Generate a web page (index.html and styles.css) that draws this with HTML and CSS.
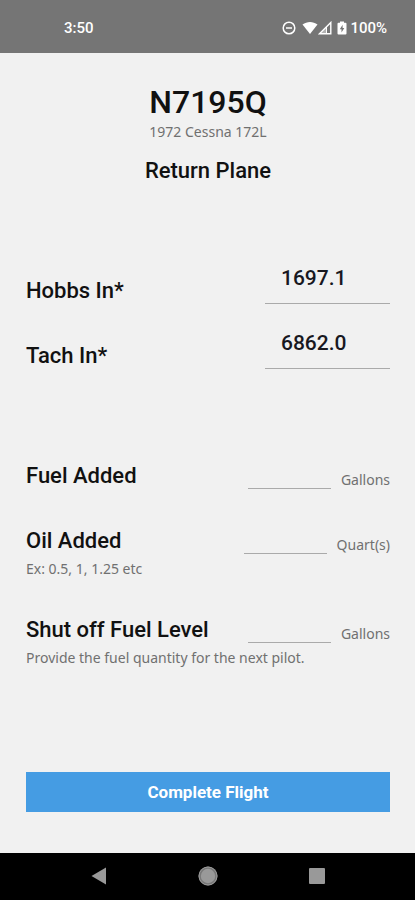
FILE: index.html
```html
<!DOCTYPE html>
<html lang="en">
<head>
<meta charset="utf-8">
<meta name="viewport" content="width=device-width, initial-scale=1">
<title>Return Plane</title>
<link rel="stylesheet" href="styles.css">
</head>
<body>
<div class="status-bar">
  <span>3:50</span>
  <div class="status-icons">
    <svg width="14" height="14" viewBox="0 0 14 14" fill="none" stroke="currentColor" stroke-width="1.5"><circle cx="7" cy="7" r="5.8"/><path d="M4 7h6"/></svg>
    <svg class="wifi" width="16" height="14" viewBox="0 0 16 14" fill="currentColor"><path d="M0.5 3.6C5 0 11 0 15.500 3.600L8 13z"/></svg>
    <svg width="14" height="14" viewBox="0 0 14 14" fill="none" stroke="currentColor" stroke-width="1.400"><path d="M1.500 12.800L12.800 1.500V12.800z"/><path d="M1.500 12.800L8.500 5.800V12.800z" fill="currentColor" fill-opacity=".45" stroke="none"/><path d="M8.500 5.800V12.800" stroke-width="1"/></svg>
    <svg class="battery" width="10" height="14" viewBox="0 0 10 14"><path fill="currentColor" d="M3 .5h4v1.300h1.500q1 0 1 1v9.700q0 1-1 1h-7q-1 0-1-1V2.800q0-1 1-1H3z"/><path fill="#757575" d="M5.600 3.800L2.800 8.200h1.700v3.300l2.800-4.400H5.600z"/></svg>
    <span>100%</span>
  </div>
</div>
<main class="screen">
  <header class="plane">
    <h1>N7195Q</h1>
    <p class="model">1972 Cessna 172L</p>
    <h2>Return Plane</h2>
  </header>
  <form class="form">
    <div class="meters">
      <div class="row">
        <label for="hobbs">Hobbs In*</label>
        <input class="meter" id="hobbs" type="text" inputmode="decimal" value="1697.1">
      </div>
      <div class="row">
        <label for="tach">Tach In*</label>
        <input class="meter" id="tach" type="text" inputmode="decimal" value="6862.0">
      </div>
    </div>
    <div class="fluids">
      <div class="row">
        <label for="fuel">Fuel Added</label>
        <div class="quantity"><input id="fuel" type="text" inputmode="decimal"><span>Gallons</span></div>
      </div>
      <div>
        <div class="row">
          <label for="oil">Oil Added</label>
          <div class="quantity"><input id="oil" type="text" inputmode="decimal"><span>Quart(s)</span></div>
        </div>
        <p class="hint">Ex: 0.5, 1, 1.25 etc</p>
      </div>
      <div>
        <div class="row">
          <label for="level">Shut off Fuel Level</label>
          <div class="quantity"><input id="level" type="text" inputmode="decimal"><span>Gallons</span></div>
        </div>
        <p class="hint">Provide the fuel quantity for the next pilot.</p>
      </div>
    </div>
    <button class="submit" type="button">Complete Flight</button>
  </form>
</main>
<nav class="nav-bar">
  <button type="button" aria-label="Back"><svg width="20" height="20" viewBox="0 0 20 20"><path fill="currentColor" d="M2.500 10L17 1.500v17z"/></svg></button>
  <button type="button" aria-label="Home"><svg width="20" height="20" viewBox="0 0 20 20"><circle cx="10" cy="10" r="9.500" fill="#777"/><circle cx="10" cy="10" r="7.200" fill="currentColor"/><circle cx="10" cy="10" r="9" fill="none" stroke="currentColor"/></svg></button>
  <button type="button" aria-label="Recent apps"><svg width="20" height="20" viewBox="0 0 20 20"><rect x="2" y="2" width="16" height="16" rx="1" fill="currentColor"/></svg></button>
</nav>
</body>
</html>
```
FILE: styles.css
```css
* {
  box-sizing: border-box;
}

body {
  display: flex;
  flex-direction: column;
  min-height: 100vh;
  margin: 0;
  background: #f1f1f1;
  color: #111;
  font-family: Roboto, sans-serif;
}

h1, h2, p {
  margin: 0;
}

.status-bar {
  display: flex;
  align-items: center;
  justify-content: space-between;
  padding: 19px 28px 16px 64px;
  background: #757575;
  color: #fff;
  font-size: 15px;
  font-weight: 500;
  line-height: 18px;
}

.status-icons {
  display: flex;
  align-items: center;
}

.wifi {
  margin-left: 6px;
}

.battery {
  margin: 0 3px 0 5px;
}

.screen {
  display: flex;
  flex: 1;
  flex-direction: column;
  padding: 32px 25px 41px 26px;
}

.plane {
  text-align: center;
}

h1 {
  font-size: 32px;
  font-weight: 500;
  line-height: 34px;
}

.model, .hint, .quantity {
  color: #707070;
  font-family: "Noto Sans", sans-serif;
  font-size: 14px;
  font-weight: 400;
  line-height: 18px;
}

.model {
  margin: 4px 0 17px;
}

h2, label {
  font-size: 22px;
  font-weight: 500;
  line-height: 26px;
}

.form {
  display: flex;
  flex: 1;
  flex-direction: column;
  padding-top: 68px;
}

.meters {
  display: grid;
  gap: 13px;
}

.fluids {
  display: grid;
  gap: 39px;
  margin: 94px 0 40px;
}

.row {
  display: flex;
  align-items: flex-end;
  justify-content: space-between;
}

input {
  width: 83px;
  height: 26px;
  padding: 0;
  border: 0;
  border-bottom: 1px solid #aaa;
  border-radius: 0;
  outline: 0;
  background: transparent;
  color: #18181f;
  font: 500 21px Roboto, sans-serif;
}

.meter {
  width: 125px;
  height: 52px;
  padding: 0 16px;
}

.quantity {
  display: flex;
  align-items: flex-end;
  gap: 10px;
}

.hint {
  margin-top: 6px;
}

.submit {
  height: 40px;
  margin-top: auto;
  padding: 0;
  border: 0;
  background: #459ce3;
  color: #fff;
  font: 700 17px Roboto, sans-serif;
}

.nav-bar {
  display: flex;
  justify-content: space-around;
  padding: 13px 44px 14px;
  background: #000;
}

.nav-bar button {
  display: flex;
  padding: 0;
  border: 0;
  background: none;
  color: #999;
}
```
